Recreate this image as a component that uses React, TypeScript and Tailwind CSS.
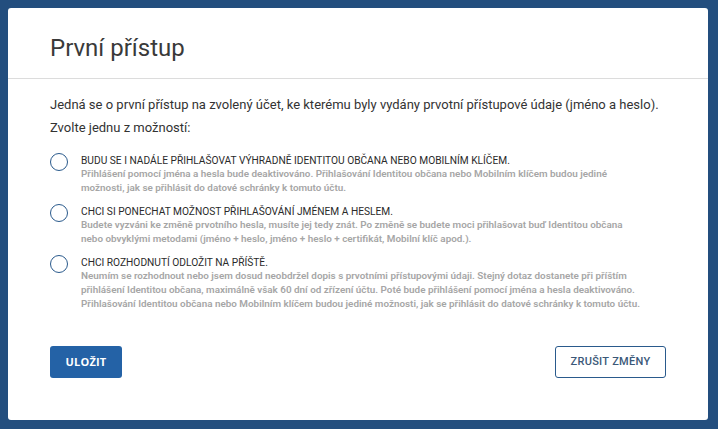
const options = [
  {
    title: "BUDU SE I NADÁLE PŘIHLAŠOVAT VÝHRADNĚ IDENTITOU OBČANA NEBO MOBILNÍM KLÍČEM.",
    lines: [
      "Přihlášení pomocí jména a hesla bude deaktivováno. Přihlašování Identitou občana nebo Mobilním klíčem budou jediné",
      "možnosti, jak se přihlásit do datové schránky k tomuto účtu.",
    ],
  },
  {
    title: "CHCI SI PONECHAT MOŽNOST PŘIHLAŠOVÁNÍ JMÉNEM A HESLEM.",
    lines: [
      "Budete vyzváni ke změně prvotního hesla, musíte jej tedy znát. Po změně se budete moci přihlašovat buď Identitou občana",
      "nebo obvyklými metodami (jméno + heslo, jméno + heslo + certifikát, Mobilní klíč apod.).",
    ],
  },
  {
    title: "CHCI ROZHODNUTÍ ODLOŽIT NA PŘÍŠTĚ.",
    lines: [
      "Neumím se rozhodnout nebo jsem dosud neobdržel dopis s prvotními přístupovými údaji. Stejný dotaz dostanete při příštím",
      "přihlášení Identitou občana, maximálně však 60 dní od zřízení účtu. Poté bude přihlášení pomocí jména a hesla deaktivováno.",
      "Přihlašování Identitou občana nebo Mobilním klíčem budou jediné možnosti, jak se přihlásit do datové schránky k tomuto účtu.",
    ],
  },
]

export default function App() {
  return (
    <div className="w-[718px] h-[429px] bg-[#234e7e] pt-2 pl-2 pr-[10px] pb-[9px] font-['Roboto',sans-serif]">
      <div className="h-full bg-white rounded-[3px] flex flex-col">
        {/* Header */}
        <div className="h-[71px] border-b border-[#dcdcdc] px-[42px] flex items-center">
          <h1 className="text-[24px] text-[#3a3a3a] leading-none pt-[10px]">První přístup</h1>
        </div>

        {/* Body */}
        <div className="px-[42px] pt-[14px]">
          <p className="text-[13px] leading-[23px] text-[#333]">
            Jedná se o první přístup na zvolený účet, ke kterému byly vydány prvotní přístupové údaje (jméno a heslo).
            <br />
            Zvolte jednu z možností:
          </p>

          <div className="mt-[15px] flex flex-col gap-[10px]">
            {options.map((o) => (
              <label key={o.title} className="flex gap-[13px] cursor-pointer">
                <span className="mt-[-1px] w-[18px] h-[18px] shrink-0 rounded-full border-[1.5px] border-[#2a5a8c] bg-white" />
                <span className="flex flex-col">
                  <span className="text-[10.2px] leading-[13px] text-[#2a2a2a]">{o.title}</span>
                  {o.lines.map((l) => (
                    <span key={l} className="text-[9.9px] leading-[14px] text-[#a6a6a6] font-semibold whitespace-nowrap">
                      {l}
                    </span>
                  ))}
                </span>
              </label>
            ))}
          </div>
        </div>

        {/* Footer */}
        <div className="mt-auto px-[42px] pb-[42px] flex justify-between">
          <button className="w-[72px] h-[32px] rounded-[3px] bg-[#2462a6] text-white text-[11px] font-bold font-['Open_Sans',sans-serif] tracking-[0.2px]">
            ULOŽIT
          </button>
          <button className="w-[111px] h-[32px] rounded-[3px] border border-[#2a5a8c] text-[#3b5878] text-[11px] font-medium tracking-[0.3px]">
            ZRUŠIT ZMĚNY
          </button>
        </div>
      </div>
    </div>
  )
}
